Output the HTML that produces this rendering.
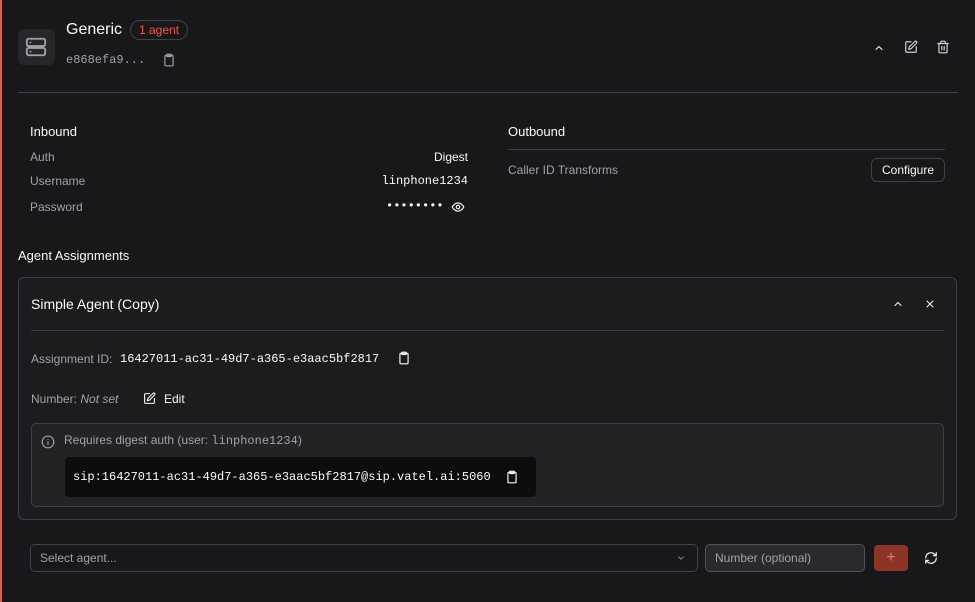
<!DOCTYPE html>
<html><head><style>
*{box-sizing:border-box;margin:0;padding:0}
body{width:975px;height:602px;background:#18181b;color:#fafafa;font-family:"Liberation Sans",sans-serif;position:relative;overflow:hidden;font-size:12px}
.a{position:absolute}
.mono{font-family:"Liberation Mono",monospace}
.g{color:#a1a1aa}
svg{fill:none;stroke:currentColor;stroke-width:2;stroke-linecap:round;stroke-linejoin:round}
</style></head><body>
<div class="a" style="left:0;top:0;width:2px;height:602px;background:#ef5a3c"></div>
<div class="a" style="left:18px;top:29px;width:37px;height:36px;background:#27272a;border-radius:6px"></div>
<svg class="a" style="left:25px;top:36px;color:#a1a1aa" width="22" height="22" viewBox="0 0 24 24" stroke-width="1.8"><rect x="2" y="3" width="20" height="8" rx="2"/><rect x="2" y="13" width="20" height="8" rx="2"/><path d="M6 7h.01M6 17h.01"/></svg>
<div class="a" style="left:66px;top:21px;font-size:16px">Generic</div>
<div class="a" style="left:130px;top:20px;height:20px;padding:0 8px;border:1px solid #3f3f46;border-radius:10px;color:#ef5a3c;font-size:12px;line-height:18px">1 agent</div>
<div class="a mono g" style="left:66px;top:53px;font-size:12px">e868efa9...</div>
<svg class="a g" style="left:162px;top:53px" width="14" height="14" viewBox="0 0 24 24"><rect x="5" y="4" width="14" height="18" rx="2"/><rect x="8" y="2" width="8" height="4" rx="1"/></svg>
<svg class="a" style="left:873px;top:42px" width="12" height="12" viewBox="0 0 24 24"><path d="M6 15l6-6 6 6"/></svg>
<svg class="a" style="left:904px;top:40px;color:#d4d4d8" width="14" height="14" viewBox="0 0 24 24"><path d="M12 3H5a2 2 0 0 0-2 2v14a2 2 0 0 0 2 2h14a2 2 0 0 0 2-2v-7"/><path d="M18.4 2.6a2 2 0 0 1 3 3L12 15l-4 1 1-4z"/></svg>
<svg class="a" style="left:936px;top:40px;color:#d4d4d8" width="14" height="14" viewBox="0 0 24 24"><path d="M3 6h18M19 6v14a2 2 0 0 1-2 2H7a2 2 0 0 1-2-2V6M8 6V4a2 2 0 0 1 2-2h4a2 2 0 0 1 2 2v2M10 11v6M14 11v6"/></svg>
<div class="a" style="left:18px;top:92px;width:940px;height:1px;background:#3f3f46"></div>

<div class="a" style="left:30px;top:124px;font-size:13px">Inbound</div>
<div class="a g" style="left:30px;top:150px">Auth</div><div class="a" style="right:507px;top:150px">Digest</div>
<div class="a g" style="left:30px;top:174px">Username</div><div class="a mono" style="right:507px;top:174px">linphone1234</div>
<div class="a g" style="left:30px;top:200px">Password</div><div class="a mono" style="left:386px;top:199px;letter-spacing:0">••••••••</div>
<svg class="a" style="left:451px;top:200px" width="14" height="14" viewBox="0 0 24 24"><path d="M2 12s4-7 10-7 10 7 10 7-4 7-10 7S2 12 2 12z"/><circle cx="12" cy="12" r="3"/></svg>
<div class="a" style="left:508px;top:124px;font-size:13px">Outbound</div>
<div class="a" style="left:508px;top:149px;width:437px;height:1px;background:#3f3f46"></div>
<div class="a g" style="left:508px;top:163px">Caller ID Transforms</div>
<div class="a" style="left:871px;top:158px;width:74px;height:24px;border:1px solid #3f3f46;border-radius:6px;text-align:center;line-height:22px">Configure</div>

<div class="a" style="left:18px;top:248px;font-size:13px">Agent Assignments</div>
<div class="a" style="left:18px;top:277px;width:939px;height:243px;border:1px solid #3f3f46;border-radius:6px;background:#1c1c1f"></div>
<div class="a" style="left:31px;top:296px;font-size:14px">Simple Agent (Copy)</div>
<svg class="a" style="left:892px;top:298px" width="12" height="12" viewBox="0 0 24 24"><path d="M6 15l6-6 6 6"/></svg>
<svg class="a" style="left:924px;top:298px" width="12" height="12" viewBox="0 0 24 24"><path d="M18 6L6 18M6 6l12 12"/></svg>
<div class="a" style="left:31px;top:330px;width:913px;height:1px;background:#3f3f46"></div>
<div class="a g" style="left:31px;top:352px">Assignment ID:</div>
<div class="a mono" style="left:120px;top:352px">16427011-ac31-49d7-a365-e3aac5bf2817</div>
<svg class="a" style="left:397px;top:351px" width="14" height="14" viewBox="0 0 24 24"><rect x="5" y="4" width="14" height="18" rx="2"/><rect x="8" y="2" width="8" height="4" rx="1"/></svg>
<div class="a g" style="left:31px;top:392px">Number: <i>Not set</i></div>
<svg class="a" style="left:143px;top:392px" width="13" height="13" viewBox="0 0 24 24"><path d="M12 3H5a2 2 0 0 0-2 2v14a2 2 0 0 0 2 2h14a2 2 0 0 0 2-2v-7"/><path d="M18.4 2.6a2 2 0 0 1 3 3L12 15l-4 1 1-4z"/></svg>
<div class="a" style="left:164px;top:392px">Edit</div>
<div class="a" style="left:31px;top:423px;width:913px;height:84px;border:1px solid #3f3f46;border-radius:5px;background:#232326"></div>
<svg class="a g" style="left:41px;top:435px" width="14" height="14" viewBox="0 0 24 24"><circle cx="12" cy="12" r="10"/><path d="M12 16v-4M12 8h.01"/></svg>
<div class="a g" style="left:64px;top:433px">Requires digest auth (user: <span class="mono">linphone1234</span>)</div>
<div class="a" style="left:65px;top:457px;width:471px;height:40px;background:#0d0d0e;border-radius:4px"></div>
<div class="a mono" style="left:73px;top:470px">sip:16427011-ac31-49d7-a365-e3aac5bf2817@sip.vatel.ai:5060</div>
<svg class="a" style="left:505px;top:470px" width="14" height="14" viewBox="0 0 24 24"><rect x="5" y="4" width="14" height="18" rx="2"/><rect x="8" y="2" width="8" height="4" rx="1"/></svg>

<div class="a g" style="left:30px;top:544px;width:668px;height:28px;border:1px solid #3f3f46;border-radius:5px;padding:0 9px;line-height:26px">Select agent...</div>
<svg class="a g" style="left:676px;top:553px" width="10" height="10" viewBox="0 0 24 24"><path d="M6 9l6 6 6-6"/></svg>
<div class="a g" style="left:705px;top:544px;width:160px;height:28px;border:1px solid #52525b;border-radius:5px;background:#2a2a2d;padding:0 9px;line-height:26px">Number (optional)</div>
<div class="a" style="left:874px;top:545px;width:34px;height:26px;background:#8e3427;border-radius:4px;color:#c98a80;text-align:center;line-height:25px;font-size:16px">+</div>
<svg class="a" style="left:924px;top:551px" width="14" height="14" viewBox="0 0 24 24"><path d="M21 12a9 9 0 0 1-15 6.7L3 16M3 12a9 9 0 0 1 15-6.7L21 8M21 3v5h-5M3 21v-5h5"/></svg>
</body></html>
